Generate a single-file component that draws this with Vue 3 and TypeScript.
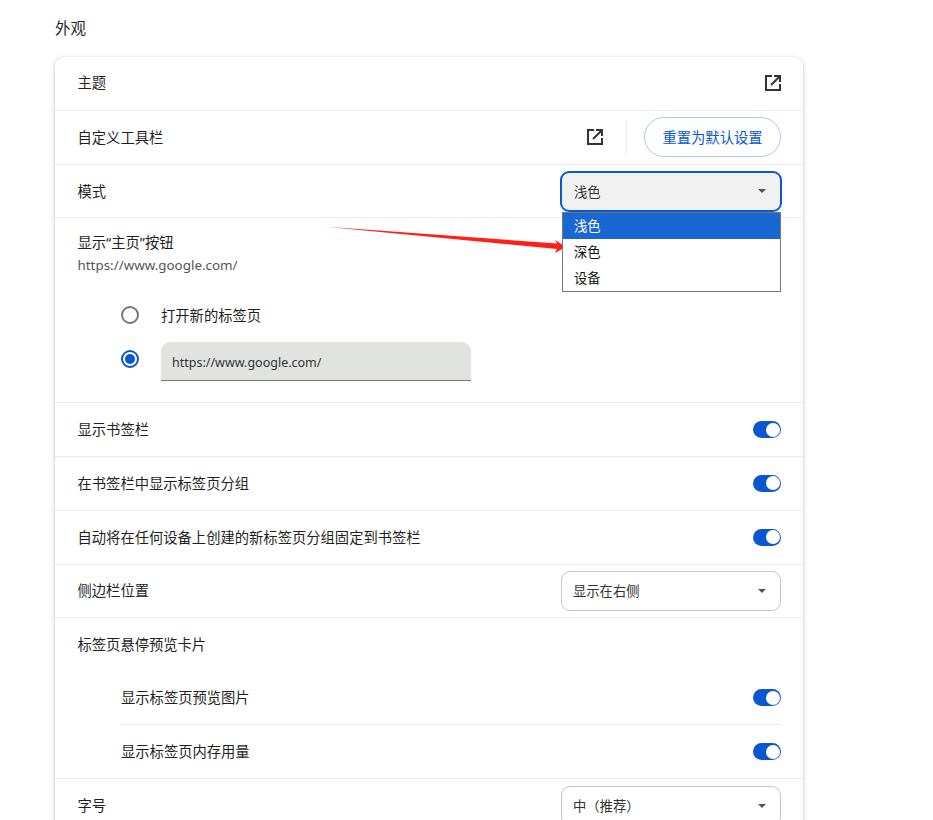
<script setup lang="ts">
import { ref } from "vue";

const themeOptions = ref(["浅色", "深色", "设备"]);
const previewToggles = ref(["显示标签页预览图片", "显示标签页内存用量"]);
</script>

<template>
  <div class="page">
    <h2 class="section-title">外观</h2>

    <div class="card">
      <div class="row">
        <span>主题</span>
        <svg class="ext-icon" viewBox="0 0 18 18"><path d="M2 1h6v2H3v12h12v-5h2v7H1V1z M10 1h7v7h-2V4.4l-7.3 7.3-1.4-1.4L13.6 3H10z" /></svg>
      </div>
      <div class="row">
        <span>自定义工具栏</span>
        <div class="row-actions">
          <svg class="ext-icon" viewBox="0 0 18 18"><path d="M2 1h6v2H3v12h12v-5h2v7H1V1z M10 1h7v7h-2V4.4l-7.3 7.3-1.4-1.4L13.6 3H10z" /></svg>
          <span class="vline"></span>
          <button class="reset-btn">重置为默认设置</button>
        </div>
      </div>
      <div class="row">
        <span>模式</span>
        <div class="select select-open">
          <span>浅色</span><i class="caret"></i>
          <ul class="menu">
            <li v-for="(o, i) in themeOptions" :key="o" :class="{ active: i === 0 }">{{ o }}</li>
          </ul>
        </div>
      </div>

      <div class="home">
        <div class="home-label">显示“主页”按钮</div>
        <div class="home-url">https://www.google.com/</div>
        <div class="radio-row first">
          <span class="radio"></span>
          <span>打开新的标签页</span>
        </div>
        <div class="radio-row">
          <span class="radio on"></span>
          <div class="url-input">https://www.google.com/</div>
        </div>
      </div>

      <div class="row">
        <span>显示书签栏</span>
        <span class="toggle"></span>
      </div>
      <div class="row">
        <span>在书签栏中显示标签页分组</span>
        <span class="toggle"></span>
      </div>
      <div class="row">
        <span>自动将在任何设备上创建的新标签页分组固定到书签栏</span>
        <span class="toggle"></span>
      </div>
      <div class="row">
        <span>侧边栏位置</span>
        <div class="select"><span>显示在右侧</span><i class="caret"></i></div>
      </div>
      <div class="row">
        <span>标签页悬停预览卡片</span>
      </div>
      <div class="sub-list">
        <div v-for="t in previewToggles" :key="t" class="sub-row">
          <span>{{ t }}</span>
          <span class="toggle"></span>
        </div>
      </div>
      <div class="row">
        <span>字号</span>
        <div class="select"><span>中（推荐）</span><i class="caret"></i></div>
      </div>
    </div>

    <svg class="arrow" width="250" height="40" viewBox="0 0 250 40">
      <defs>
        <linearGradient id="fade" x1="0" x2="1" y1="0" y2="0">
          <stop offset="0" stop-color="#ff1f14" stop-opacity="0.5" />
          <stop offset="0.1" stop-color="#ff1f14" />
        </linearGradient>
      </defs>
      <path d="M0 2.5 L234 19.5 L232 16 L243 23 L232 29 L234 25 Z" fill="url(#fade)" />
    </svg>
  </div>
</template>

<style>
html,
body {
  margin: 0;
  background: #fff;
  overflow: hidden;
}
</style>

<style scoped>
.page {
  position: relative;
  width: 933px;
  height: 820px;
  overflow: hidden;
  padding: 18px 0 0 55px;
  box-sizing: border-box;
  font-family: "Noto Sans", "Noto Sans CJK SC", sans-serif;
  font-size: 14.3px;
  color: #1f1f1f;
}

.section-title {
  margin: 0 0 19px;
  height: 20px;
  line-height: 20px;
  font-size: 15.5px;
  font-weight: 400;
}

.card {
  width: 748px;
  background: #fff;
  border-radius: 9px;
  box-shadow: 0 1px 2px rgba(60, 64, 67, 0.3), 0 1px 4px 1px rgba(60, 64, 67, 0.15);
}

.row {
  display: flex;
  align-items: center;
  justify-content: space-between;
  height: 53.7px;
  padding: 0 22px 0 22.5px;
  box-sizing: border-box;
  border-top: 1px solid #ebebeb;
}

.home ~ .row {
  height: 53.8px;
}

.row > span:first-child {
  margin-bottom: 2px;
}

.row:first-child {
  height: 53px;
  padding-bottom: 1px;
  border-top: 0;
}

.row:first-child > span:first-child {
  margin-bottom: 3px;
}

.row > .ext-icon {
  margin-right: -1px;
}

.row-actions {
  display: flex;
  align-items: center;
}

.ext-icon {
  width: 18px;
  height: 18px;
  fill: #333;
}

.vline {
  width: 1px;
  height: 35px;
  margin: 0 17px 0 22px;
  background: #ebebeb;
}

.reset-btn {
  width: 137px;
  height: 40px;
  padding: 0 0 2px;
  font: inherit;
  color: #0b57d0;
  background: #fff;
  border: 1px solid #a8c7fa;
  border-radius: 20px;
}

.select {
  position: relative;
  display: flex;
  align-items: center;
  justify-content: space-between;
  width: 220px;
  height: 40px;
  padding: 0 14px 0 11px;
  box-sizing: border-box;
  font-size: 13.3px;
  color: #333;
  border: 1px solid #c4c7c5;
  border-radius: 9px;
}

.select-open {
  width: 222px;
  height: 41px;
  margin-right: -1px;
  background: #f1f1f1;
  border: 2px solid #0b57d0;
  padding-left: 12px;
  padding-right: 14px;
}

.caret {
  width: 0;
  height: 0;
  border-left: 4.5px solid transparent;
  border-right: 4.5px solid transparent;
  border-top: 4.5px solid #555;
}

.menu {
  position: absolute;
  left: 0;
  top: 39px;
  width: 219px;
  margin: 0;
  padding: 0;
  list-style: none;
  box-sizing: border-box;
  background: #fff;
  border: 1px solid #767676;
  z-index: 2;
}

.menu li {
  height: 26px;
  line-height: 26px;
  padding-left: 11px;
  color: #111;
}

.menu li.active {
  background: #1967d2;
  color: #fff;
}

.home {
  height: 184.8px;
  padding: 15px 22px 0 22.5px;
  box-sizing: border-box;
  border-top: 1px solid #ebebeb;
}

.home-label {
  line-height: 20px;
}

.home-url {
  margin-top: 2px;
  line-height: 20px;
  font-size: 13.4px;
  color: #555;
}

.radio-row {
  display: flex;
  align-items: flex-start;
  gap: 22px;
  margin-top: 18px;
  padding-left: 43.5px;
}

.radio-row.first {
  align-items: center;
  margin-top: 29px;
  height: 20px;
}

.radio {
  flex: none;
  position: relative;
  width: 18px;
  height: 18px;
  box-sizing: border-box;
  border: 2px solid #747775;
  border-radius: 50%;
}

.radio-row.first .radio {
  margin-top: 1px;
}

.radio.on {
  margin-top: 8px;
  border-color: #0b57d0;
}

.radio.on::after {
  content: "";
  position: absolute;
  inset: 2px;
  border-radius: 50%;
  background: #0b57d0;
}

.url-input {
  width: 310px;
  height: 39px;
  line-height: 42px;
  padding-left: 11px;
  box-sizing: border-box;
  font-size: 12.5px;
  color: #333;
  background: #e1e3e1;
  border-bottom: 1px solid #747775;
  border-radius: 9px 9px 0 0;
}

.sub-list {
  padding: 0 22px 0 66px;
}

.sub-row {
  display: flex;
  align-items: center;
  justify-content: space-between;
  height: 53px;
  box-sizing: border-box;
}

.sub-row + .sub-row {
  height: 54px;
  border-top: 1px solid #ebebeb;
}

.sub-row > span:first-child {
  margin-bottom: 2px;
}

.toggle {
  position: relative;
  width: 28px;
  height: 17px;
  border-radius: 9px;
  background: #0b57d0;
}

.toggle::after {
  content: "";
  position: absolute;
  right: 1.5px;
  top: 1.5px;
  width: 14px;
  height: 14px;
  border-radius: 50%;
  background: #fff;
}

.arrow {
  position: absolute;
  left: 323px;
  top: 224px;
}
</style>
